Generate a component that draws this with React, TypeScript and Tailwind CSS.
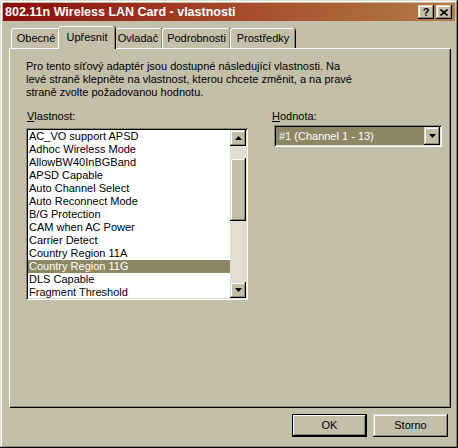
import React from "react";

const raised =
  "shadow-[inset_-1px_-1px_#000,inset_1px_1px_#e2decf,inset_-2px_-2px_#8a8670,inset_2px_2px_#fff]";
const sunken =
  "shadow-[inset_1px_1px_#8a8670,inset_-1px_-1px_#fff,inset_2px_2px_#000,inset_-2px_-2px_#e2decf]";

const items = [
  "AC_VO support APSD",
  "Adhoc Wireless Mode",
  "AllowBW40InBGBand",
  "APSD Capable",
  "Auto Channel Select",
  "Auto Reconnect Mode",
  "B/G Protection",
  "CAM when AC Power",
  "Carrier Detect",
  "Country Region 11A",
  "Country Region 11G",
  "DLS Capable",
  "Fragment Threshold",
];

function Arrow({ down }: { down?: boolean }) {
  return (
    <svg width="7" height="4" viewBox="0 0 7 4">
      {down ? (
        <polygon points="0,0 7,0 3.5,4" fill="#000" />
      ) : (
        <polygon points="0,4 7,4 3.5,0" fill="#000" />
      )}
    </svg>
  );
}

function Tab({ label, w, active }: { label: string; w: string; active?: boolean }) {
  if (active) {
    return (
      <div
        className={`${w} relative z-10 -mx-[2px] h-[23px] -mb-[1px] flex items-start justify-center pt-[4px] bg-[#c4bfa8] border-t border-l border-white rounded-t-[3px] shadow-[inset_-1px_0_#8a8670,1px_0_#000]`}
      >
        {label}
      </div>
    );
  }
  return (
    <div
      className={`${w} mt-[2px] h-[20px] flex items-start justify-center pt-[3px] border-t border-l border-white rounded-t-[3px] shadow-[inset_-1px_0_#8a8670,1px_0_#000]`}
    >
      {label}
    </div>
  );
}

export default function App() {
  return (
    <div
      className={`w-[458px] h-[448px] bg-[#c4bfa8] p-[3px] flex flex-col text-[11px] leading-[13px] text-black ${raised}`}
      style={{ fontFamily: '"Liberation Sans", Arial, sans-serif' }}
    >
      <div className="h-[18px] flex items-center justify-between pl-[2px] pr-[3px] bg-[linear-gradient(to_right,#8a0c0c,#a5482a_50%,#b27c47)]">
        <span className="text-white font-bold text-[12.5px] leading-[16px]">
          802.11n Wireless LAN Card - vlastnosti
        </span>
        <div className="flex gap-[2px]">
          <div className={`w-[16px] h-[14px] bg-[#c4bfa8] flex items-center justify-center font-bold text-[11px] leading-none ${raised}`}>
            ?
          </div>
          <div className={`w-[16px] h-[14px] bg-[#c4bfa8] flex items-center justify-center ${raised}`}>
            <svg width="8" height="7" viewBox="0 0 8 7">
              <path d="M0.5 0.5 L7.5 6.5 M7.5 0.5 L0.5 6.5" stroke="#000" strokeWidth="1.6" />
            </svg>
          </div>
        </div>
      </div>

      <div className="flex-1 flex flex-col px-[6px] pt-[5px]">
        <div className="flex pl-[2px] h-[22px] items-end">
          <Tab label="Obecné" w="w-[49px]" />
          <Tab label="Upřesnit" w="w-[57px]" active />
          <Tab label="Ovladač" w="w-[49px]" />
          <Tab label="Podrobnosti" w="w-[68px]" />
          <Tab label="Prostředky" w="w-[65px]" />
        </div>

        <div className="w-[441px] h-[359px] border-t border-l border-white shadow-[inset_-1px_-1px_#8a8670,1px_1px_#000] pl-[16px] pt-[11px]">
          <p className="whitespace-nowrap">
            Pro tento síťový adaptér jsou dostupné následující vlastnosti. Na
            <br />
            levé straně klepněte na vlastnost, kterou chcete změnit, a na pravé
            <br />
            straně zvolte požadovanou hodnotu.
          </p>

          <div className="flex mt-[11px]">
            <div className="flex flex-col">
              <div className="pl-[1px] mb-[5px]">
                <span className="underline">V</span>lastnost:
              </div>
              <div className={`w-[222px] h-[172px] bg-white p-[2px] flex ${sunken}`}>
                <div className="flex-1 flex flex-col">
                  {items.map((it) => (
                    <div
                      key={it}
                      className={`h-[13px] pl-[1px] whitespace-nowrap ${
                        it === "Country Region 11G" ? "bg-[#8c8863] text-white" : ""
                      }`}
                    >
                      {it}
                    </div>
                  ))}
                </div>
                <div className="w-[16px] flex flex-col bg-[#e2dfd2]">
                  <div className={`h-[16px] bg-[#c4bfa8] flex items-center justify-center ${raised}`}>
                    <Arrow />
                  </div>
                  <div className="h-[12px]" />
                  <div className={`h-[63px] bg-[#c4bfa8] ${raised}`} />
                  <div className="flex-1" />
                  <div className={`h-[16px] bg-[#c4bfa8] flex items-center justify-center ${raised}`}>
                    <Arrow down />
                  </div>
                </div>
              </div>
            </div>

            <div className="flex flex-col ml-[24px]">
              <div className="mb-[2px]">
                <span className="underline">H</span>odnota:
              </div>
              <div className={`ml-[2px] w-[168px] h-[22px] bg-white p-[2px] flex ${sunken}`}>
                <div className="flex-1 bg-[#8c8863] text-white pl-[3px] pt-[3px]">
                  #1 (Channel 1 - 13)
                </div>
                <div className={`w-[16px] bg-[#c4bfa8] flex items-center justify-center ${raised}`}>
                  <Arrow down />
                </div>
              </div>
            </div>
          </div>
        </div>

        <div className="flex justify-end gap-[6px] mt-[7px] pr-[1px]">
          <div className="w-[75px] h-[23px] border border-black flex items-center justify-center shadow-[inset_-1px_-1px_#000,inset_1px_1px_#fff,inset_-2px_-2px_#8a8670]">
            OK
          </div>
          <div className={`w-[75px] h-[23px] flex items-center justify-center ${raised}`}>
            Storno
          </div>
        </div>
      </div>
    </div>
  );
}
